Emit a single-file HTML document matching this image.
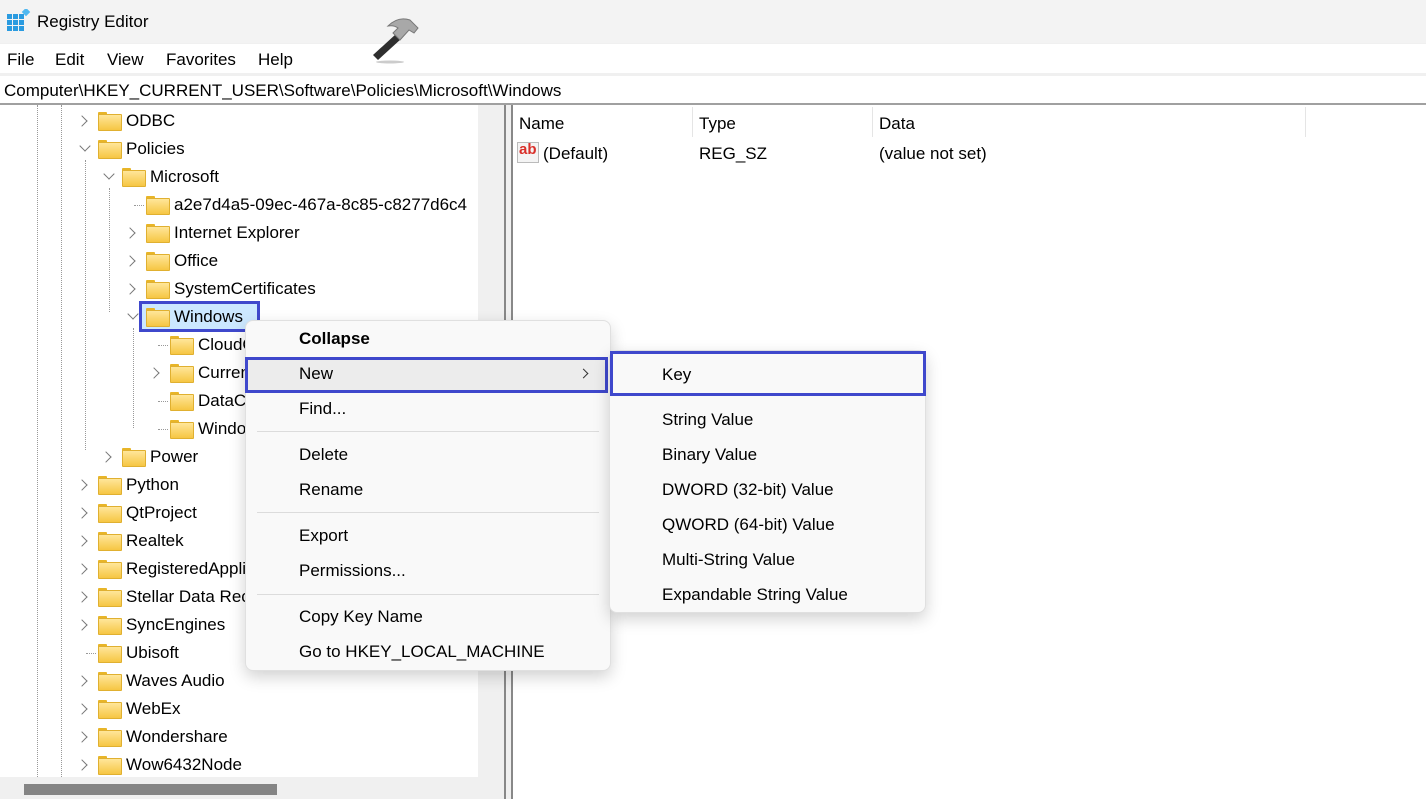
<!DOCTYPE html>
<html><head><meta charset="utf-8"><style>
*{margin:0;padding:0;box-sizing:border-box}
body{width:1426px;height:799px;overflow:hidden;background:#f0f0f0;font-family:"Liberation Sans",sans-serif;color:#000;position:relative;font-size:17px}
.a{position:absolute;white-space:nowrap}
.t{position:absolute;line-height:20px;white-space:nowrap}
.f{position:absolute;width:22px;height:17px}
.f:before{content:"";position:absolute;left:0;top:0;width:9px;height:4px;background:#e8b528;border-radius:1px 1px 0 0}
.f:after{content:"";position:absolute;left:0;top:2px;width:22px;height:15px;background:linear-gradient(#ffe69a,#f6c643);border:1px solid #e0b030;border-radius:1px}
.ch{position:absolute;width:8px;height:8px;border-right:1.5px solid #777;border-bottom:1.5px solid #777}
.vl{position:absolute;width:0;border-left:1px dotted #999}
.hl{position:absolute;height:0;border-top:1px dotted #999}
.mi{position:absolute;left:299px;line-height:20px;white-space:nowrap}
.si{position:absolute;left:662px;line-height:20px;white-space:nowrap}
.sep{position:absolute;height:1px;background:#dcdcdc}
</style></head><body>
<div class="a" style="left:0;top:0;width:1426px;height:43px;background:#f3f3f3"></div>
<svg class="a" style="left:7px;top:9px" width="24" height="24" viewBox="0 0 24 24"><g fill="#2a9be0"><rect x="0" y="5" width="5" height="5"/><rect x="6" y="5" width="5" height="5"/><rect x="12" y="5" width="5" height="5"/><rect x="0" y="11" width="5" height="5"/><rect x="6" y="11" width="5" height="5"/><rect x="12" y="11" width="5" height="5"/><rect x="0" y="17" width="5" height="5"/><rect x="6" y="17" width="5" height="5"/><rect x="12" y="17" width="5" height="5"/></g><rect x="16" y="0" width="6" height="6" fill="#50b8f0" transform="rotate(45 19 3)"/></svg>
<div class="t" style="left:37px;top:12px;font-size:17px">Registry Editor</div>
<svg class="a" style="left:370px;top:14px;z-index:3" width="52" height="50" viewBox="0 0 52 50"><path d="M3 41 L26 20 L31 25 L8 46 Z" fill="#2e2e2e"/><path d="M18 12 Q28 2 40 6 L48 14 L44 19 L39 16 L30 26 L23 19 L28 14 Q24 11 18 12 Z" fill="#a8a8a8" stroke="#777" stroke-width="1"/><ellipse cx="20" cy="48" rx="14" ry="1.5" fill="#ccc"/></svg>
<div class="a" style="left:0;top:44px;width:1426px;height:29px;background:#fff"></div>
<div class="t" style="left:7px;top:50px">File</div>
<div class="t" style="left:55px;top:50px">Edit</div>
<div class="t" style="left:107px;top:50px">View</div>
<div class="t" style="left:166px;top:50px">Favorites</div>
<div class="t" style="left:258px;top:50px">Help</div>
<div class="a" style="left:0;top:76px;width:1426px;height:27px;background:#fff"></div>
<div class="t" style="left:4px;top:81px">Computer\HKEY_CURRENT_USER\Software\Policies\Microsoft\Windows</div>
<div class="a" style="left:0;top:103px;width:1426px;height:2px;background:#a0a0a0"></div>
<div class="a" style="left:504px;top:105px;width:2px;height:694px;background:#888"></div>
<div class="a" style="left:511px;top:105px;width:2px;height:694px;background:#888"></div>
<div class="a" style="left:513px;top:105px;width:913px;height:694px;background:#fff"></div>
<div class="a" style="left:24px;top:784px;width:253px;height:11px;background:#858585"></div>
<div class="a" style="left:0;top:105px;width:478px;height:672px;background:#fff;overflow:hidden">
<div style="position:absolute;left:0;top:-105px">
<div class="vl" style="left:37px;top:105px;height:672px"></div>
<div class="vl" style="left:61px;top:105px;height:672px"></div>
<div class="vl" style="left:85px;top:160px;height:290px"></div>
<div class="vl" style="left:109px;top:188px;height:124px"></div>
<div class="vl" style="left:133px;top:328px;height:100px"></div>
<div class="hl" style="left:134px;top:205px;width:10px"></div>
<div class="hl" style="left:158px;top:345px;width:10px"></div>
<div class="hl" style="left:158px;top:401px;width:10px"></div>
<div class="hl" style="left:158px;top:429px;width:10px"></div>
<div class="hl" style="left:86px;top:653px;width:10px"></div>
<div class="a" style="left:139px;top:301px;width:121px;height:31px;border:3px solid #3f48cc;background:#cce8ff"></div>
<div id="tree"></div>
</div></div>
<div class="t" style="left:519px;top:114px">Name</div>
<div class="t" style="left:699px;top:114px">Type</div>
<div class="t" style="left:879px;top:114px">Data</div>
<div class="a" style="left:692px;top:107px;width:1px;height:30px;background:#e5e5e5"></div>
<div class="a" style="left:872px;top:107px;width:1px;height:30px;background:#e5e5e5"></div>
<div class="a" style="left:1305px;top:107px;width:1px;height:30px;background:#e5e5e5"></div>
<div class="a" style="left:517px;top:142px;width:22px;height:21px;background:#f4f4f4;border:1px solid #bbb;color:#d9302a;font-weight:bold;font-size:15px;line-height:14px;padding-left:1px">ab</div>
<div class="t" style="left:543px;top:144px">(Default)</div>
<div class="t" style="left:699px;top:144px">REG_SZ</div>
<div class="t" style="left:879px;top:144px">(value not set)</div>
<script>
var rows=[[0,'ODBC','>'],[0,'Policies','v'],[1,'Microsoft','v'],[2,'a2e7d4a5-09ec-467a-8c85-c8277d6c4',''],[2,'Internet Explorer','>'],[2,'Office','>'],[2,'SystemCertificates','>'],[2,'Windows','v'],[3,'CloudContent',''],[3,'CurrentVersion','>'],[3,'DataCollection',''],[3,'WindowsUpdate',''],[1,'Power','>'],[0,'Python','>'],[0,'QtProject','>'],[0,'Realtek','>'],[0,'RegisteredApplications','>'],[0,'Stellar Data Recovery','>'],[0,'SyncEngines','>'],[0,'Ubisoft',''],[0,'Waves Audio','>'],[0,'WebEx','>'],[0,'Wondershare','>'],[0,'Wow6432Node','>']];
var h='';rows.forEach(function(r,i){var y=121+i*28,x=24*r[0];
if(r[2]=='>')h+='<div class="ch" style="left:'+(78+x)+'px;top:'+(y-4)+'px;transform:rotate(-45deg)"></div>';
if(r[2]=='v')h+='<div class="ch" style="left:'+(81+x)+'px;top:'+(y-7)+'px;transform:rotate(45deg)"></div>';
h+='<div class="f" style="left:'+(98+x)+'px;top:'+(y-9)+'px"></div>';
h+='<div class="t" style="left:'+(126+x)+'px;top:'+(y-10)+'px;z-index:2">'+r[1]+'</div>';});
document.getElementById('tree').innerHTML=h;
</script>
<div class="a" style="left:245px;top:320px;width:366px;height:351px;background:#f9f9f9;border:1px solid #e0e0e0;border-radius:8px;box-shadow:0 6px 16px rgba(0,0,0,.18);z-index:5"></div>
<div style="position:absolute;left:0;top:0;z-index:6">
<div class="mi" style="top:329px;font-weight:bold">Collapse</div>
<div class="a" style="left:245px;top:357px;width:363px;height:36px;background:#ececec;border:3px solid #3f48cc"></div>
<div class="mi" style="top:364px">New</div>
<div class="ch" style="left:580px;top:370px;width:7px;height:7px;border-color:#333;border-width:1.3px;transform:rotate(-45deg)"></div>
<div class="mi" style="top:399px">Find...</div>
<div class="sep" style="left:257px;top:431px;width:342px"></div>
<div class="mi" style="top:445px">Delete</div>
<div class="mi" style="top:480px">Rename</div>
<div class="sep" style="left:257px;top:512px;width:342px"></div>
<div class="mi" style="top:526px">Export</div>
<div class="mi" style="top:561px">Permissions...</div>
<div class="sep" style="left:257px;top:594px;width:342px"></div>
<div class="mi" style="top:607px">Copy Key Name</div>
<div class="mi" style="top:642px">Go to HKEY_LOCAL_MACHINE</div>
</div>
<div class="a" style="left:609px;top:350px;width:317px;height:263px;background:#f9f9f9;border:1px solid #e0e0e0;border-radius:8px;box-shadow:0 6px 16px rgba(0,0,0,.18);z-index:7"></div>
<div style="position:absolute;left:0;top:0;z-index:8">
<div class="a" style="left:610px;top:351px;width:316px;height:45px;border:3px solid #3f48cc"></div>
<div class="si" style="top:365px">Key</div>
<div class="si" style="top:410px">String Value</div>
<div class="si" style="top:445px">Binary Value</div>
<div class="si" style="top:480px">DWORD (32-bit) Value</div>
<div class="si" style="top:515px">QWORD (64-bit) Value</div>
<div class="si" style="top:550px">Multi-String Value</div>
<div class="si" style="top:585px">Expandable String Value</div>
</div>
</body></html>
